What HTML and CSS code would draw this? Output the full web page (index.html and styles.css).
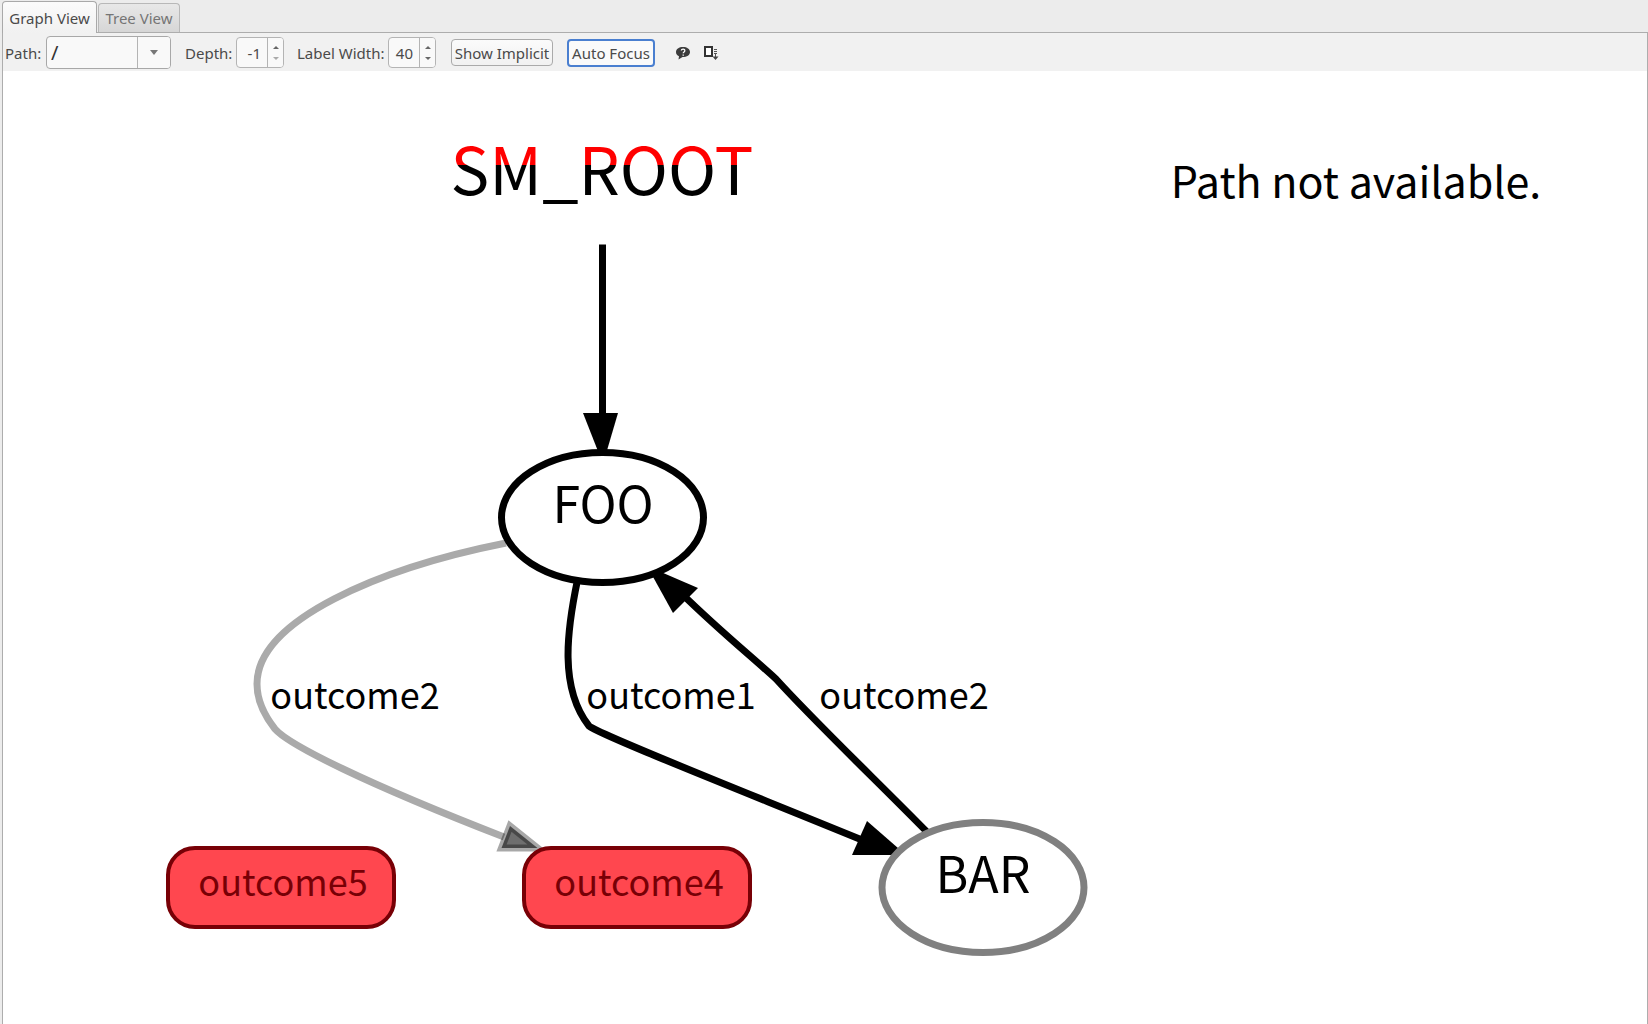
FILE: index.html
```html
<!DOCTYPE html>
<html lang="en">
<head>
<meta charset="utf-8">
<title>State machine viewer</title>
<link rel="stylesheet" href="styles.css">
</head>
<body>
<div class="tabs" role="tablist">
  <button class="tab tab-active" role="tab" aria-selected="true">Graph View</button>
  <button class="tab" role="tab" aria-selected="false">Tree View</button>
</div>
<main class="pane">
  <div class="toolbar">
    <div class="field">
      <label for="path">Path:</label>
      <div class="combo">
        <input id="path" type="text" value="/">
        <button class="combo-open" aria-label="Show paths"><svg width="8" height="5"><path d="M0 0h8L4 5z"/></svg></button>
      </div>
    </div>
    <div class="field">
      <label for="depth">Depth:</label>
      <div class="spin">
        <input id="depth" type="text" inputmode="numeric" value="-1">
        <div class="steps">
          <button aria-label="Increase depth"><svg width="6" height="3"><path d="M0 3h6L3 0z"/></svg></button>
          <button aria-label="Decrease depth" disabled><svg width="6" height="3"><path d="M0 0h6L3 3z"/></svg></button>
        </div>
      </div>
    </div>
    <div class="field">
      <label for="label-width">Label Width:</label>
      <div class="spin">
        <input id="label-width" type="text" inputmode="numeric" value="40">
        <div class="steps">
          <button aria-label="Increase label width"><svg width="6" height="3"><path d="M0 3h6L3 0z"/></svg></button>
          <button aria-label="Decrease label width"><svg width="6" height="3"><path d="M0 0h6L3 3z"/></svg></button>
        </div>
      </div>
    </div>
    <button class="push push-implicit">Show Implicit</button>
    <button class="push push-focus">Auto Focus</button>
    <div class="tools">
      <button class="tool" aria-label="Help">
        <svg width="14" height="14" viewBox="0 0 14 14"><path d="M7 1C3 1 0 3 0 6c0 2 1 3.500 3 4.300L2.500 13.500 6.500 11C11 11 14 9 14 6S11 1 7 1z" fill="#3c3c3c"/><path d="M5.300 4.500C5.500 2.700 9 2.800 8.800 4.700 8.700 6 7.200 6 7.200 7.300M7.200 8.400v1.300" fill="none" stroke="#fff" stroke-width="1.300"/></svg>
      </button>
      <button class="tool" aria-label="Fit to view">
        <svg width="15" height="14" viewBox="0 0 15 14"><path d="M1 1h7v9H1z" fill="#fff" stroke="#333" stroke-width="2"/><path d="M10 3.500h3M10 5.500h3M10 7.500h3M11.500 8v3" stroke="#555" fill="none"/><path d="M8.500 10.500h6l-3 3.500z" fill="#444"/></svg>
      </button>
    </div>
  </div>
  <svg class="graph" role="img" aria-label="State machine graph">
    <defs>
      <linearGradient id="title-fill" gradientUnits="userSpaceOnUse" x1="0" y1="145" x2="0" y2="185">
        <stop offset="50%" stop-color="#f00"/>
        <stop offset="50%" stop-color="#000"/>
      </linearGradient>
    </defs>
    <g transform="translate(-3 -71)">
      <path class="edge" d="M602.500 244.500V415"/>
      <path class="head" d="M583 413H618L603 464z"/>
      <path class="edge edge-dim" d="M506 543C380 568 257 620 257 684C257 700 264 715 275 729C289 745 365 783 504 837"/>
      <path class="head-dim" d="M510 826L501.500 848H537.500z"/>
      <path class="edge" d="M577.500 580C567 630 559 688 589 726C600 735 740 790 872 844"/>
      <path class="head" d="M867 821L852 855H906z"/>
      <path class="edge" d="M928 833C880 784 816 723 776 679C751 656 721 632 682 594"/>
      <path class="head" d="M698 588L673 613L647 566z"/>

      <ellipse class="state" cx="602.500" cy="517.500" rx="101" ry="65"/>
      <ellipse class="state state-dim" cx="983" cy="887.500" rx="101" ry="65"/>
      <rect class="outcome" x="168" y="848" width="226" height="79" rx="27"/>
      <rect class="outcome" x="524" y="848" width="226" height="79" rx="27"/>

      <text class="title" x="602" y="195">SM_ROOT</text>
      <text class="state-name" x="603" y="523">FOO</text>
      <text class="state-name" x="983" y="893">BAR</text>
      <text class="label" x="355" y="709">outcome2</text>
      <text class="label" x="671" y="709">outcome1</text>
      <text class="label" x="904" y="709">outcome2</text>
      <text class="label outcome-name" x="283" y="896">outcome5</text>
      <text class="label outcome-name" x="639" y="896">outcome4</text>
      <text class="message" x="1356" y="198">Path not available.</text>
    </g>
  </svg>
</main>
</body>
</html>
```

FILE: styles.css
```css
* { box-sizing: border-box; }

body {
  margin: 0;
  min-height: 100vh;
  display: flex;
  flex-direction: column;
  background: #ececec;
  color: #4a4a4a;
  font: 15px/20px "Noto Sans", sans-serif;
}

button, input {
  margin: 0;
  padding: 0;
  font: inherit;
  color: inherit;
  outline: none;
}

/* Tabs */
.tabs {
  display: flex;
  align-items: flex-end;
  gap: 1px;
  height: 32px;
  padding-left: 2px;
}

.tab {
  width: 82px;
  height: 29px;
  border: 1px solid #b8b8b8;
  border-bottom: 0;
  border-radius: 4px 4px 0 0;
  background: linear-gradient(#e8e8e8, #d6d6d6);
  color: #757575;
  white-space: nowrap;
}

.tab-active {
  position: relative;
  width: 95px;
  height: 32px;
  margin-bottom: -1px;
  border-color: #a9a9a9;
  background: linear-gradient(#fbfbfb, #f1f1f1);
  color: #4a4a4a;
}

.pane {
  flex: 1;
  display: flex;
  flex-direction: column;
  margin-left: 2px;
  border: solid #adadad;
  border-width: 1px 1px 0 1px;
  background: #fff;
}

/* Toolbar */
.toolbar {
  display: flex;
  align-items: center;
  height: 38px;
  padding: 1px 0 0 2px;
  background: #f1f1f1;
  white-space: nowrap;
}

.field {
  display: flex;
  align-items: center;
  justify-content: space-between;
  flex: none;
  width: 166px;
  margin-right: 14px;
}

.field + .field { width: 99px; margin-right: 13px; }
.field + .field + .field { width: 139px; margin-right: 15px; }

.combo, .spin {
  display: flex;
  border: 1px solid #a8a8a8;
  border-radius: 4px;
  background: #f9f9f9;
  overflow: hidden;
}

.combo { width: 125px; height: 33px; }
.spin { width: 48px; height: 31px; border-color: #b4b4b4; }

.combo input, .spin input {
  flex: 1;
  min-width: 0;
  border: 0;
  background: none;
}

.combo input { padding-left: 4px; font-size: 20px; color: #333; }
.spin input { padding-right: 6px; text-align: right; }

.combo-open, .steps {
  display: flex;
  align-items: center;
  justify-content: center;
  border: 0;
  border-left: 1px solid #b4b4b4;
  background: #f9f9f9;
}

.combo-open { width: 33px; fill: #777; }
.steps { flex-direction: column; gap: 4px; width: 16px; }
.steps button { display: flex; padding: 2px; border: 0; background: none; fill: #666; }
.steps button:disabled { fill: #aaa; }

.push {
  height: 27px;
  border: 1px solid #aaa;
  border-radius: 4px;
  background: linear-gradient(#fbfbfb, #f1f1f1);
}

.push-implicit { width: 102px; margin-right: 14px; }
.push-focus {
  width: 88px;
  height: 28px;
  border: 2px solid #4a7fd0;
  background: #fafafa;
}

.tools { display: flex; gap: 14px; margin-left: 21px; }
.tool { display: flex; border: 0; background: none; }

/* Graph */
.graph {
  display: block;
  flex: 1;
  width: 100%;
  min-height: 890px;
  font-family: "Noto Sans CJK JP", sans-serif;
  text-anchor: middle;
}

.edge { fill: none; stroke: #000; stroke-width: 7px; }
.edge-dim { stroke: #aaa; }
.head-dim { fill: rgba(0, 0, 0, .57); stroke: rgba(0, 0, 0, .34); stroke-width: 7px; }
.state { fill: #fff; stroke: #000; stroke-width: 7px; }
.state-dim { stroke: #808080; }
.outcome { fill: #ff474f; stroke: #780006; stroke-width: 4px; }
.title { font-size: 65px; fill: url(#title-fill); }
.state-name { font-size: 50px; }
.label { font-size: 36px; }
.outcome-name { fill: #780006; }
.message { font-size: 43px; }
```
